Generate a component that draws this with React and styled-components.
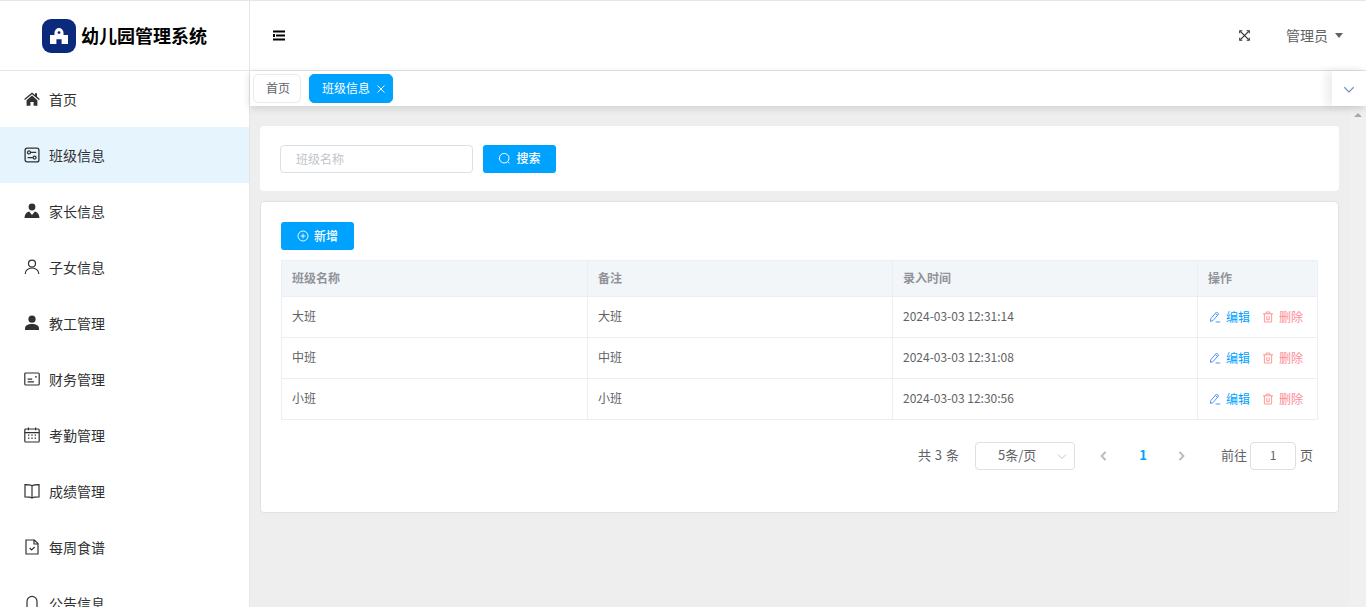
import React from 'react';
import styled, { createGlobalStyle } from 'styled-components';

const GlobalStyle = createGlobalStyle`
  html, body { margin: 0; height: 100%; overflow: hidden; background: #eeeeee; }
  body { font-family: "Noto Sans CJK SC", "Liberation Sans", sans-serif; color: #606266; }
  * { box-sizing: border-box; }
`;

const Shell = styled.div`
  display: flex;
  height: 607px;
  overflow: hidden;
  border-top: 1px solid #e6e6e6;
`;

const Sidebar = styled.aside`
  width: 250px;
  flex: none;
  background: #fff;
  border-right: 1px solid #e6e6e6;
  overflow: hidden;
`;

const Brand = styled.div`
  height: 70px;
  border-bottom: 1px solid #e6e6e6;
  display: flex;
  align-items: center;
  padding-left: 42px;
  gap: 5px;
`;

const BrandName = styled.span`
  font-size: 18px;
  font-weight: 700;
  color: #000;
  padding-bottom: 2px;
`;

const MenuItem = styled.div`
  height: 56px;
  display: flex;
  align-items: center;
  padding-left: 24px;
  gap: 9px;
  font-size: 14px;
  color: #303133;
  background: ${p => (p.$active ? '#e6f4fe' : '#fff')};
  svg { flex: none; width: 16px; height: 16px; color: #303133; }
`;

const Main = styled.main`
  flex: 1;
  min-width: 0;
  display: flex;
  flex-direction: column;
  position: relative;
`;

const Header = styled.header`
  height: 70px;
  flex: none;
  background: #fff;
  border-bottom: 1px solid #e6e6e6;
  display: flex;
  align-items: center;
  padding: 0 23px;
`;

const HeaderRight = styled.div`
  margin-left: auto;
  display: flex;
  align-items: center;
  gap: 36px;
`;

const UserName = styled.span`
  display: flex;
  align-items: center;
  gap: 7px;
  font-size: 14px;
  color: #606266;
`;

const Caret = styled.i`
  width: 0;
  height: 0;
  border-left: 4.5px solid transparent;
  border-right: 4.5px solid transparent;
  border-top: 5px solid #606266;
`;

// the CJK font sits a little low in its line box, this lifts the text back up
const Label = styled.span`
  padding-bottom: 2px;
`;

const PagerLabel = styled.span`
  padding-bottom: 4px;
`;

const TabBar = styled.div`
  height: 35px;
  flex: none;
  background: #fff;
  display: flex;
  align-items: center;
  padding-left: 3px;
  gap: 8px;
  position: relative;
  z-index: 2;
  box-shadow: 0 2px 8px rgba(0, 0, 0, 0.14);
`;

const Tag = styled.div`
  height: 29px;
  border-radius: 5px;
  display: flex;
  align-items: center;
  gap: 6px;
  padding: ${p => (p.$active ? '0 6px 0 12px' : '0 10px 0 12px')};
  font-size: 12px;
  border: 1px solid ${p => (p.$active ? '#00a2ff' : '#e8eaec')};
  background: ${p => (p.$active ? '#00a2ff' : '#fff')};
  color: ${p => (p.$active ? '#fff' : '#606266')};
`;

const TabToggle = styled.div`
  margin-left: auto;
  width: 34px;
  height: 35px;
  background: #fff;
  display: flex;
  align-items: center;
  justify-content: center;
  color: #6e8fc0;
  box-shadow: -6px 0 8px rgba(0, 0, 0, 0.07);
`;

const ScrollTrack = styled.div`
  position: absolute;
  right: 0;
  top: 105px;
  bottom: 0;
  width: 17px;
  z-index: 1;
  background: #f0f0f0;
`;

const ScrollArrow = styled.i`
  position: absolute;
  left: 5px;
  top: 7px;
  width: 0;
  height: 0;
  border-left: 4px solid transparent;
  border-right: 4px solid transparent;
  border-bottom: 4px solid #a8a8a8;
`;

const Content = styled.div`
  flex: 1;
  padding: 20px 27px 0 10px;
  display: flex;
  flex-direction: column;
  gap: 10px;
`;

const SearchCard = styled.section`
  height: 65px;
  background: #fff;
  border-radius: 4px;
  display: flex;
  align-items: center;
  padding: 0 20px;
  gap: 10px;
`;

const SearchInput = styled.div`
  width: 193px;
  height: 28px;
  border: 1px solid #dcdfe6;
  border-radius: 4px;
  display: flex;
  align-items: center;
  padding-left: 15px;
  font-size: 12px;
  color: #c0c4cc;
`;

const PrimaryButton = styled.div`
  width: 73px;
  height: 28px;
  border-radius: 3px;
  background: #00a2ff;
  color: #fff;
  font-size: 12px;
  font-weight: 500;
  display: flex;
  align-items: center;
  justify-content: center;
  gap: 5px;
`;

const TableCard = styled.section`
  height: 312px;
  background: #fff;
  border: 1px solid #dfe1e6;
  border-radius: 4px;
  padding: 20px;
  display: flex;
  flex-direction: column;
  align-items: flex-start;
`;

const Table = styled.table`
  width: 1036px;
  margin-top: 10px;
  border-collapse: collapse;
  table-layout: fixed;
  font-size: 12px;
  border: 1px solid #ebeef5;
  th, td { border: 1px solid #ebeef5; padding: 0 10px; text-align: left; }
  th { height: 36px; padding-bottom: 2px; background: #f3f6f9; color: #909399; font-weight: 700; }
  td { height: 41px; padding-bottom: 3px; color: #606266; }
  td.actions { padding-bottom: 0; }
`;

const Actions = styled.div`
  display: flex;
  align-items: center;
  margin-left: 1px;
`;

const ActionLink = styled.span`
  display: flex;
  align-items: center;
  gap: 5px;
  width: ${p => (p.$danger ? 'auto' : '53px')};
  color: ${p => (p.$danger ? '#ff8a96' : '#00a2ff')};
  svg { flex: none; color: ${p => (p.$danger ? '#ff8f8f' : '#4f93ff')}; }
`;

const Pager = styled.div`
  align-self: flex-end;
  display: flex;
  align-items: center;
  margin-top: 22px;
  padding-right: 5px;
  font-size: 13px;
  color: #606266;
`;

const PageTotal = styled(PagerLabel)`
  word-spacing: 1px;
`;

const PageSize = styled.div`
  width: 100px;
  height: 28px;
  margin-left: 16px;
  border: 1px solid #dcdfe6;
  border-radius: 4px;
  display: flex;
  align-items: center;
  padding: 0 6px 0 22px;
  justify-content: space-between;
  svg { color: #c0c4cc; }
`;

const PageArrow = styled.span`
  display: flex;
  color: #b4b9c2;
  margin-left: ${p => p.$gap}px;
`;

const PageNumber = styled(PagerLabel)`
  width: 10px;
  margin-left: 28px;
  text-align: center;
  font-weight: 700;
  color: #00a2ff;
`;

const Jump = styled.span`
  margin-left: 34px;
  display: flex;
  align-items: center;
  gap: 3px;
`;

const JumpInput = styled.div`
  width: 46px;
  height: 28px;
  margin-right: 1px;
  border: 1px solid #dcdfe6;
  border-radius: 4px;
  display: flex;
  align-items: center;
  justify-content: center;
  font-size: 12px;
`;

const Icon = ({ children, size = 16, stroke = 1.2, fill = 'none', view = 16 }) => (
  <svg width={size} height={size} viewBox={`0 0 ${view} ${view}`} fill={fill} stroke={fill === 'none' ? 'currentColor' : 'none'} strokeWidth={stroke}>
    {children}
  </svg>
);

const icons = {
  home: (
    <Icon fill="currentColor">
      <path d="M8 1.4 0.2 8l.8 1L8 3.2 15 9l.8-1-2.8-2.4V2.2h-2v1.7z" />
      <path d="M8 4.6 2.6 9.2v5.6h3.8v-3.8h3.2v3.8h3.8V9.2z" />
    </Icon>
  ),
  classes: (
    <Icon stroke={1.3}>
      <rect x="1.1" y="1.1" width="13.8" height="13.8" rx="2" />
      <circle cx="5" cy="5.4" r="1.5" />
      <path d="M6.8 5.4h5.4M3.6 10.6h5.2" />
      <circle cx="10.6" cy="10.6" r="1.5" />
    </Icon>
  ),
  parent: (
    <Icon fill="currentColor">
      <circle cx="8" cy="4" r="3.4" />
      <path d="M0.6 15c0-3.6 2.2-6 4.6-6.4L8 12l2.8-3.4c2.4.4 4.6 2.8 4.6 6.4z" />
    </Icon>
  ),
  child: (
    <Icon>
      <circle cx="8" cy="4.6" r="3.5" />
      <path d="M1.2 15c0-3.6 3-6 6.8-6s6.8 2.4 6.8 6" />
    </Icon>
  ),
  staff: (
    <Icon fill="currentColor">
      <circle cx="8" cy="4.2" r="3.6" />
      <path d="M1 15v-1.6C1 10.8 3.6 9 8 9s7 1.8 7 4.4V15z" />
    </Icon>
  ),
  finance: (
    <Icon>
      <rect x="0.8" y="2" width="14.4" height="12" rx="1" />
      <path d="M3.6 8.2h4.6M3.6 10.8h6.4M11 5.8h1.8" />
    </Icon>
  ),
  calendar: (
    <Icon>
      <rect x="0.8" y="2" width="14.4" height="13" rx="1" />
      <path d="M0.8 5.6h14.4M4.4 0.6v2.6M11.6 0.6v2.6" />
      <path d="M4 8.2h1.4M7.3 8.2h1.4M10.6 8.2h1.4M4 11.2h1.4M7.3 11.2h1.4M10.6 11.2h1.4" />
    </Icon>
  ),
  book: (
    <Icon>
      <path d="M8 2.8C6.6 1.8 4 1.6 1 1.6v12.2c3 0 5.6.2 7 1.2 1.4-1 4-1.2 7-1.2V1.6c-3 0-5.4.2-7 1.2zM8 2.8V15" />
    </Icon>
  ),
  recipe: (
    <Icon>
      <path d="M2 1h8.4L14 4.6V15H2zM10 1v4h4" />
      <path d="M5.6 9l2 2 3-3" />
    </Icon>
  ),
  notice: (
    <Icon>
      <path d="M3 12V6.4a5 5 0 0 1 10 0V12l1.4 1.6H1.6zM6.4 15h3.2" />
    </Icon>
  ),
};

const menu = [
  ['home', '首页'],
  ['classes', '班级信息', true],
  ['parent', '家长信息'],
  ['child', '子女信息'],
  ['staff', '教工管理'],
  ['finance', '财务管理'],
  ['calendar', '考勤管理'],
  ['book', '成绩管理'],
  ['recipe', '每周食谱'],
  ['notice', '公告信息'],
];

const rows = [
  ['大班', '大班', '2024-03-03 12:31:14'],
  ['中班', '中班', '2024-03-03 12:31:08'],
  ['小班', '小班', '2024-03-03 12:30:56'],
];

const Logo = () => (
  <svg width="34" height="34" viewBox="0 0 34 34">
    <rect width="34" height="34" rx="9" fill="#0b2a7c" />
    <path d="M12.5 16v-2.4a4.5 4.5 0 0 1 9 0V16h4.5v9h-6.4v-4.8h-5.2V25H8v-9z" fill="#fff" />
    <circle cx="17" cy="13.6" r="1.4" fill="#0b2a7c" />
  </svg>
);

const Collapse = () => (
  <svg width="13" height="11" viewBox="0 0 13 11" fill="#000">
    <rect x="0" y="0.5" width="12" height="2" />
    <rect x="3" y="4.5" width="9" height="2" />
    <rect x="0" y="8.5" width="12" height="2" />
    <rect x="0" y="4" width="2" height="3" />
  </svg>
);

const Fullscreen = () => (
  <svg width="11" height="11" viewBox="0 0 12 12" fill="none" stroke="#303133" strokeWidth="1.3">
    <path d="M1.5 1.5l9 9M10.5 1.5l-9 9" />
    <path d="M0.8 3.6V0.8h2.8M8.4 0.8h2.8v2.8M11.2 8.4v2.8H8.4M3.6 11.2H0.8V8.4" strokeWidth="1.2" />
  </svg>
);

const Chevron = ({ dir = 'down', size = 12, stroke = 1 }) => {
  const d = { down: 'M2 4.5l4 4 4-4', left: 'M7.5 2l-4 4 4 4', right: 'M4.5 2l4 4-4 4' }[dir];
  return (
    <svg width={size} height={size} viewBox="0 0 12 12" fill="none" stroke="currentColor" strokeWidth={stroke}>
      <path d={d} />
    </svg>
  );
};

const Close = () => (
  <svg width="10" height="10" viewBox="0 0 10 10" stroke="#fff" strokeWidth="1">
    <path d="M1.5 1.5l7 7M8.5 1.5l-7 7" />
  </svg>
);

const Search = () => (
  <svg width="13" height="13" viewBox="0 0 13 13" fill="none" stroke="#fff" strokeWidth="1">
    <circle cx="6.2" cy="6.2" r="4.8" />
    <path d="M9.8 9.8l1.6 1.6" />
  </svg>
);

const PlusCircle = () => (
  <svg width="12" height="12" viewBox="0 0 12 12" fill="none" stroke="#fff" strokeWidth="0.9">
    <circle cx="6" cy="6" r="5" />
    <path d="M6 3.6v4.8M3.6 6h4.8" />
  </svg>
);

const Pencil = () => (
  <svg width="12" height="12" viewBox="0 0 12 12" fill="none" stroke="currentColor" strokeWidth="1">
    <path d="M7.6 1L9.6 3 4 9.6l-2.6.8.4-2.8zM6.5 2.4l2 2M6.6 11h4.6" />
  </svg>
);

const Trash = () => (
  <svg width="12" height="12" viewBox="0 0 12 12" fill="none" stroke="currentColor" strokeWidth="0.9">
    <path d="M1 2.8h10M4.2 2.8V1h3.6v1.8M2.4 2.8V11h7.2V2.8M4.8 5v3.8h2.4V5" />
  </svg>
);

export default function App() {
  return (
    <>
      <GlobalStyle />
      <Shell>
        <Sidebar>
          <Brand>
            <Logo />
            <BrandName>幼儿园管理系统</BrandName>
          </Brand>
          {menu.map(([icon, label, active]) => (
            <MenuItem key={label} $active={active}>
              {icons[icon]}
              {label}
            </MenuItem>
          ))}
        </Sidebar>
        <Main>
          <Header>
            <Collapse />
            <HeaderRight>
              <Fullscreen />
              <UserName>
                <Label>管理员</Label>
                <Caret />
              </UserName>
            </HeaderRight>
          </Header>
          <TabBar>
            <Tag>
              <Label>首页</Label>
            </Tag>
            <Tag $active>
              <Label>班级信息</Label>
              <Close />
            </Tag>
            <TabToggle>
              <Chevron size={14} />
            </TabToggle>
          </TabBar>
          <ScrollTrack>
            <ScrollArrow />
          </ScrollTrack>
          <Content>
            <SearchCard>
              <SearchInput>班级名称</SearchInput>
              <PrimaryButton>
                <Search />
                <Label>搜索</Label>
              </PrimaryButton>
            </SearchCard>
            <TableCard>
              <PrimaryButton>
                <PlusCircle />
                <Label>新增</Label>
              </PrimaryButton>
              <Table>
                <colgroup>
                  <col width="306" />
                  <col width="305" />
                  <col width="305" />
                  <col width="120" />
                </colgroup>
                <thead>
                  <tr>
                    <th>班级名称</th>
                    <th>备注</th>
                    <th>录入时间</th>
                    <th>操作</th>
                  </tr>
                </thead>
                <tbody>
                  {rows.map(row => (
                    <tr key={row[0]}>
                      {row.map((cell, i) => (
                        <td key={i}>{cell}</td>
                      ))}
                      <td className="actions">
                        <Actions>
                          <ActionLink>
                            <Pencil />
                            <Label>编辑</Label>
                          </ActionLink>
                          <ActionLink $danger>
                            <Trash />
                            <Label>删除</Label>
                          </ActionLink>
                        </Actions>
                      </td>
                    </tr>
                  ))}
                </tbody>
              </Table>
              <Pager>
                <PageTotal>共 3 条</PageTotal>
                <PageSize>
                  <PagerLabel>5条/页</PagerLabel>
                  <Chevron />
                </PageSize>
                <PageArrow $gap={23}>
                  <Chevron dir="left" stroke={1.8} />
                </PageArrow>
                <PageNumber>1</PageNumber>
                <PageArrow $gap={27}>
                  <Chevron dir="right" stroke={1.8} />
                </PageArrow>
                <Jump>
                  <PagerLabel>前往</PagerLabel>
                  <JumpInput>
                    <PagerLabel>1</PagerLabel>
                  </JumpInput>
                  <PagerLabel>页</PagerLabel>
                </Jump>
              </Pager>
            </TableCard>
          </Content>
        </Main>
      </Shell>
    </>
  );
}
